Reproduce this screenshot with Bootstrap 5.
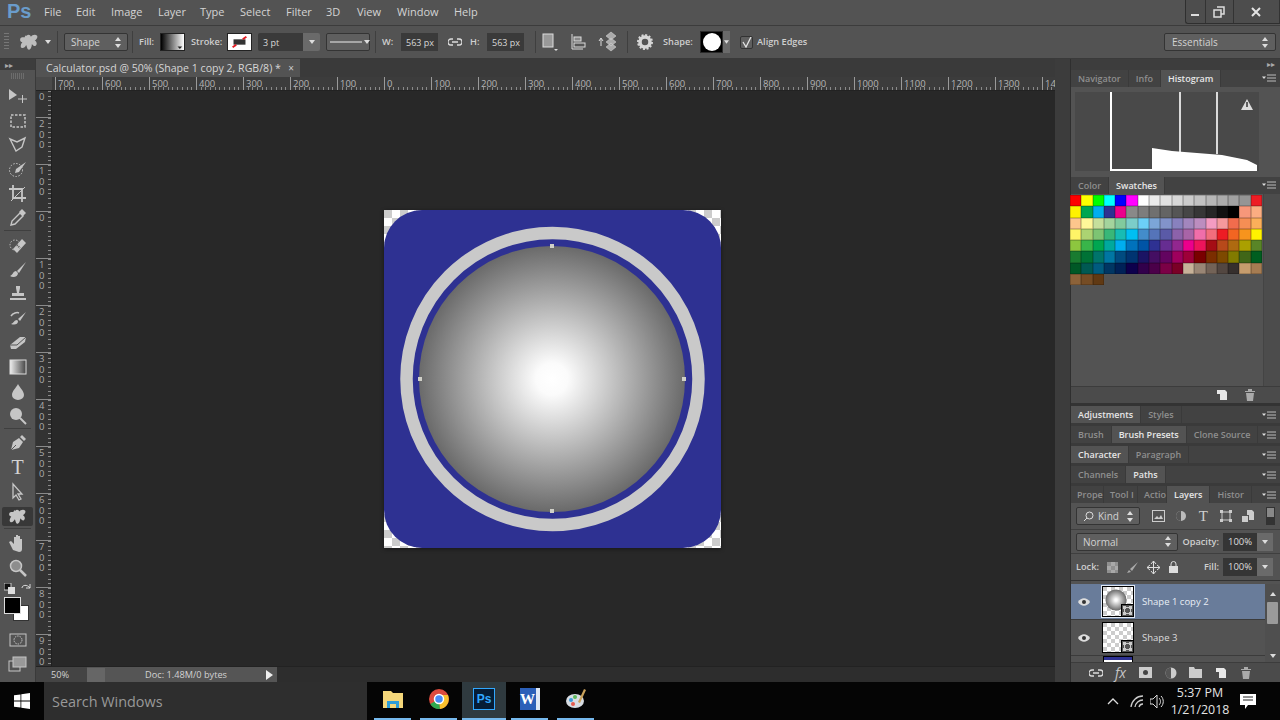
<!DOCTYPE html>
<html lang="en"><head><meta charset="utf-8"><title>Photoshop</title>
<link href="https://cdn.jsdelivr.net/npm/bootstrap@5.3.0/dist/css/bootstrap.min.css" rel="stylesheet">
<style>
html,body{margin:0;height:720px;width:1280px;overflow:hidden;background:#535353}
body{font-family:"Open Sans","Noto Sans",sans-serif;font-size:10px;color:#d0d0d0;line-height:1}
svg{display:block;flex:none}
.menubar{height:26px;background:#535353;border-bottom:1px solid #3c3c3c}
.logo{font:bold 20px "Liberation Sans",sans-serif;color:#6a9ccb;width:44px;padding-left:7px;padding-bottom:2px}
.menu{gap:0;font-size:11px;color:#d4d4d4;padding-bottom:2px}
.menu span{display:block}
.m1{width:32px}.m2{width:35px}.m3{width:47px}.m4{width:42px}.m5{width:40px}.m6{width:46px}.m7{width:40px}.m8{width:31px}.m9{width:40px}.m10{width:57px}
.winbtns{width:95px;height:24px;border:1px solid #2f2f2f;border-top:0;border-right:0;border-radius:0 0 0 3px;background:#4d4d4d}
.winbtns>div{border-right:1px solid #333}
.wb1{width:20px}.wb2{width:28px}.wb3{width:47px}
.optbar{height:33px;background:#535353;border-bottom:1px solid #3a3a3a;padding-left:4px}
.grip{width:5px;height:18px;background:repeating-linear-gradient(#777 0 1px,transparent 1px 3px)}
.sep{width:1px;height:22px;background:#3f3f3f}
.sel{height:18px;border:1px solid #343434;border-radius:2px;background:#5f5f5f;color:#d2d2d2;padding:0 6px;white-space:nowrap}
.ud{width:6px;height:11px;margin-left:auto}
.inp{height:18px;background:#3a3a3a;color:#d8d8d8;padding:0 5px;font-size:9px;white-space:nowrap}
.lab{color:#cfcfcf;font-size:9.2px;font-weight:600;white-space:nowrap}
.o-tool{margin-left:11px}.o-car{margin-left:6px}.o-s1{margin-left:6px}
.o-shape{width:64px;margin-left:6px}.o-s2{margin-left:4px}.o-fill{margin-left:6px;width:21px}
.o-fs{width:25px;height:18px;margin-left:0;border:1px solid #222}
.o-stl{margin-left:6px;width:36px}.o-pt{width:45px;margin-left:6px;border-radius:2px 0 0 2px}
.o-ptb{width:17px;height:18px;background:#6a6a6a;border-radius:0 2px 2px 0;margin-right:6px}
.o-ln{width:44px;padding:0 3px}.o-s3{margin-left:5px}.o-w{margin-left:6px;width:19px}
.o-val{width:37px}.o-link{margin:0 8px 0 10px}.o-h{width:17px}
.o-s4{margin-left:11px}.o-ic1{margin-left:4px}.o-ic2{margin-left:9px}.o-ic3{margin-left:8px}.o-s5{margin-left:8px}
.o-gear{margin-left:8px}.o-shl{margin-left:9px;width:37px}
.o-prev{width:23px;height:22px;background:#000;border:1px solid #2a2a2a}
.o-prev b{width:18px;height:18px;border-radius:50%;background:#fff;display:block}
.o-pb{width:7px;height:22px;background:#6a6a6a;margin-right:10px}
.o-chk{width:13px;height:13px;border:1px solid #333;background:#5f5f5f;margin-right:4px;border-radius:2px}
.o-ess{width:112px;height:18px;margin-left:auto;margin-right:4px;padding:0 7px}
.ws{height:623px}
.tools{width:36px;background:#535353;border-right:1px solid #3a3a3a}
.strip{height:11px;background:#3d3d3d;color:#aaa;font-size:8px;padding:0 5px}
.tgrip{height:6px;margin:3px auto 5px;width:14px;background:repeating-linear-gradient(90deg,#777 0 1px,transparent 1px 2px);opacity:.7}
.tl{height:24.4px;color:#c6c6c6}
.tl.on{background:#383838;margin:3px 2px 2.4px;border-radius:2px;height:19px}
.tsep{height:2.700px;border-top:1px solid #3f3f3f;margin:0 4px}
.ttxt{font:20px "Liberation Serif",serif;color:#d4d4d4}
.swaprow{margin-top:3px}
.chips{height:24px;width:28px;margin:3px auto 7px;position:relative}
.chips .bg{position:absolute;left:9px;top:8px;width:16px;height:16px;background:#fff;border:1px solid #333}
.chips .fg{position:absolute;left:0;top:0;width:17px;height:17px;background:#000;border:1px solid #ddd}
.docarea{width:1019px;background:#282828}
.tabstrip{height:18px;background:#3a3a3a}
.doctab{width:264px;background:#535353;color:#d6d6d6;font-size:10.6px;padding-left:10px;height:18px}
.doctab .x{margin-left:auto;margin-right:6px;color:#ccc;font-size:10px}
.corner{width:16px;background:#4a4a4a}
.hruler{height:15px;background:#3c3c3c;border-bottom:1px solid #222;overflow:hidden}
.hticks{background:repeating-linear-gradient(90deg,#8a8a8a 0 1px,transparent 1px 4.7px) 3px 100%/100% 3px no-repeat;overflow:hidden}
.hc{width:47px;flex:none;border-left:1px solid #9a9a9a;color:#b4b4b4;font-size:9.5px;padding:2px 0 0 2px;height:14px}
.hc:last-child{width:13px}
.hfirst{width:3px;flex:none}
.mid{height:575px}
.vruler{width:16px;background:#333;border-right:1px solid #1f1f1f;color:#aaa;font-size:9.5px}
.vseg{height:47px;flex:none;border-top:1px solid #8a8a8a;padding:1px 0 0 3px;background:repeating-linear-gradient(#8a8a8a 0 1px,transparent 1px 4.7px) 100% 0/3px 100% no-repeat}
.vseg span{display:block;height:10.5px;line-height:10.5px}
.vseg:last-child{height:32px}
.vfirst{height:26px;border-top:0}
.canvas{background:#282828;padding-right:2px}
.canvas svg{filter:drop-shadow(0 1px 2px rgba(0,0,0,.45))}
.status{height:17px;background:#2d2d2d;border-top:1px solid #222}
.st1{width:241px;background:#444;color:#d2d2d2;font-size:9.2px;padding-left:15px;height:100%}
.stbox{width:193px;height:100%;margin-left:18px;background:#555}
.st-ic{width:18px;height:14px;background:#666;margin-right:40px}
.gutter{width:15px;background:#3c3c3c}
.panels{width:210px;background:#535353;border-left:1px solid #2f2f2f}
.pstrip{height:11px;background:#3d3d3d;color:#aaa;font-size:8px;padding-right:5px}
.pt{height:17px;background:#424242}
.pt .nav{flex-wrap:nowrap}
.pt a.nav-link{padding:0 7px;height:17px;display:flex;align-items:center;color:#8f8f8f;font-size:9px;font-weight:600;border-right:1px solid #3a3a3a;white-space:nowrap}
.pt a.nav-link.active{background:#535353;color:#e6e6e6}
.pt a.nav-link.cut{padding:0 0 0 6px}
.w33{width:33px}.w34{width:34px}.w29{width:29px}
.pm{margin-left:auto;margin-right:4px}
.hist{height:90px;padding:5px 4px 6px}
.swbody{height:193px;background:#535353}
.swgrid{display:grid;grid-template-columns:repeat(17,11.3px);grid-auto-rows:11.3px;align-content:start;width:193px;padding-top:1px;margin-left:-1px}
.swgrid i{display:block;box-shadow:inset 0 0 0 .5px rgba(0,0,0,.35)}
.swscroll{width:17px;margin-left:auto;background:#4c4c4c;border-left:1px solid #444}
.pfoot{height:17px;background:#4b4b4b;color:#ccc;border-top:1px solid #3c3c3c}
.pgap{height:3px;background:#333}
.pgap2{height:3px;background:#3a3a3a}
.ltool{height:26px;padding:0 5px;background:#535353}
.kind{width:64px;height:18px}
.ltc{width:22.500px;height:18px}
.ltfirst{margin-left:7px}
.ltxt{font:15px "Liberation Serif",serif;color:#d0d0d0}
.ltog{width:9px;height:18px;margin-left:auto;background:linear-gradient(#888 0 9px,#333 9px);border:1px solid #333}
.lblend{height:24px;border-top:1px solid #3f3f3f;padding:0 7px 0 5px}
.normal{width:102px}
.opv{width:34px;height:18px;background:#353535;margin-left:4px;color:#ddd;font-size:9.5px;padding-left:5px}
.opb{width:16px;height:18px;background:#6a6a6a}
.llock{height:28px;border-top:1px solid #3f3f3f;border-bottom:1px solid #333;padding:0 7px 0 5px}
.list{height:81px;padding-top:3px}
.rows{width:195px}
.row-l{height:36px;color:#dcdcdc;border-bottom:1px solid #3b3b3b;font-size:9.5px}
.row-l.act{background:#697c9a;color:#e8eef5}
.eye{margin:0 12px 0 7px}
.thumb{width:32px;height:31px;margin-right:8px;border:1px solid #000;position:relative;background:#fff}
.act .thumb{outline:1px solid #dfe8f5}
.thumb svg.tb{width:100%;height:100%}
.vmask{position:absolute;right:-1px;bottom:-1px;width:13px;height:13px;background:#555;border:1px solid #000}
.row-p{height:6px;padding-left:32px;overflow:hidden}
.row-p div{width:30px;height:6px;background:linear-gradient(#2e3192 0 3px,#fff 3px);border:1px solid #000;border-bottom:0}
.lscroll{width:15px;background:#4f4f4f}
.lscroll b{display:block;width:11px;height:22px;background:#9b9b9b;margin:6px auto 0;border-radius:1px}
.lfoot{height:20px;background:#4b4b4b;border-top:1px solid #3c3c3c;color:#c6c6c6;padding-left:12px}
.lf{width:25px;height:18px}
.fxt{font-size:14px;font-style:italic}
.taskbar{height:38px;background:#050505;color:#ddd}
.start{width:44px}
.search{width:323px;height:38px;background:#2e2e2e;color:#999;font:14.4px "Open Sans",sans-serif;padding-left:8px}
.tasks{margin-left:7px}
.tk{width:37px;height:38px;margin-right:9px;border-bottom:2px solid #76b9ed;padding-bottom:2px}
.tk.on{width:44px;background:#2f3a3f;margin:0 5px 0 -4px}
.psi{width:22px;height:22px;background:#061d36;border:1.5px solid #31a8ff;color:#31a8ff;font:bold 12px "Liberation Sans",sans-serif}
.wdi{width:20px;height:22px;background:#2b5fb8;color:#fff;font:bold 15px "Liberation Serif",serif;border-right:4px solid #dfe8f5}
.tray{margin-left:auto}
.tr-w{margin-left:11px}.tr-v{margin-left:6px}
.clock{width:70px;text-align:center;font:12.4px/17px "Open Sans",sans-serif;color:#e4e4e4}
.tr-n{margin:0 24px 0 5px}
</style></head><body>
<svg width="0" height="0" class="position-absolute"><defs>
<symbol id="splat" viewBox="0 0 20 20"><path fill="currentColor" d="M7 3c1.500-2 4-1 4.500 1 1-2 5-3 6.500-1 1 2-1 4-2.500 5 2 1 3 4 1 5.500-2 1-3-1-4-2 0 2-1 6-3 6-2 0-2-3-3-5-1 2-3 4-5 3-1.500-1-.5-4 1-6-2 0-3-2-2-4 1-1.500 3-1 4.500-1 0-1 .5-1.500 1-2z"/></symbol>
<symbol id="move" viewBox="0 0 20 20"><path fill="currentColor" d="M1 3l8 6-8 5z"/><path stroke="currentColor" fill="none" d="M10 13h9M14.500 9v8"/></symbol>
<symbol id="marq" viewBox="0 0 20 20"><rect x="3" y="4" width="14" height="12" fill="none" stroke="currentColor" stroke-width="1.500" stroke-dasharray="2.500 1.500"/></symbol>
<symbol id="lasso" viewBox="0 0 20 20"><path d="M2 4l7 3 8-4-3 9-6 4-2-4z" fill="none" stroke="currentColor" stroke-width="1.400"/></symbol>
<symbol id="quick" viewBox="0 0 20 20"><circle cx="8" cy="11" r="6.500" fill="none" stroke="currentColor" stroke-dasharray="1.500 1.500"/><path d="M18 3L8 10l-1 4 4-1z" fill="currentColor"/></symbol>
<symbol id="crop" viewBox="0 0 20 20"><path d="M5 1v13h13M1 5h13v13" fill="none" stroke="currentColor" stroke-width="1.800"/><path d="M3 17L17 3" stroke="currentColor"/></symbol>
<symbol id="drop" viewBox="0 0 20 20"><path d="M3 17l1-4 8-8 3 3-8 8z" fill="none" stroke="currentColor" stroke-width="1.400"/><path d="M11 4l3-3 4 4-3 3z" fill="currentColor"/></symbol>
<symbol id="heal" viewBox="0 0 20 20"><circle cx="7" cy="10" r="5" fill="none" stroke="currentColor" stroke-dasharray="1.500 1.500"/><path d="M5 14L14 4l4 4-9 10z" fill="currentColor"/><path d="M9 10l3 3" stroke="#555" stroke-width="2" stroke-dasharray="1 1"/></symbol>
<symbol id="brush" viewBox="0 0 20 20"><path d="M18 2L9 11l2 2z" fill="currentColor"/><path d="M8 11c-3 0-3 4-6 5 3 2 8 1 8-3z" fill="currentColor"/></symbol>
<symbol id="stamp" viewBox="0 0 20 20"><path d="M8 2h4v2l-1 5h5v3H4V9h5L8 4z" fill="currentColor"/><path d="M2 14h16v2H2z" fill="currentColor"/></symbol>
<symbol id="hist" viewBox="0 0 20 20"><path d="M18 4L10 11l2 2z" fill="currentColor"/><path d="M9 12c-3 0-3 3-6 4 3 1 7 1 7-3z" fill="currentColor"/><path d="M3 8c2-3 6-4 8-3" fill="none" stroke="currentColor" stroke-width="1.500"/></symbol>
<symbol id="erase" viewBox="0 0 20 20"><path d="M2 12L12 4h6l-1 5-9 7H3z" fill="currentColor"/><path d="M2 12h7l9-8" stroke="#555" fill="none"/></symbol>
<symbol id="grad" viewBox="0 0 20 20"><defs><linearGradient id="gg"><stop offset="0" stop-color="#eee"/><stop offset="1" stop-color="#444"/></linearGradient></defs><rect x="2" y="3" width="16" height="14" fill="url(#gg)" stroke="#ddd"/></symbol>
<symbol id="blur" viewBox="0 0 20 20"><path d="M10 2c2 4 6 7 6 11a6 5 0 0 1-12 0c0-4 4-7 6-11z" fill="currentColor"/></symbol>
<symbol id="dodge" viewBox="0 0 20 20"><circle cx="8" cy="8" r="6" fill="currentColor"/><path d="M12 12l6 6" stroke="currentColor" stroke-width="2"/></symbol>
<symbol id="pen" viewBox="0 0 20 20"><path d="M3 17l2-8 6-4 4 4-4 6z" fill="currentColor"/><path d="M12 4l2-2 4 4-2 2z" fill="currentColor"/><path d="M3 17l5-5" stroke="#555"/></symbol>
<symbol id="path" viewBox="0 0 20 20"><path d="M5 2v14l3-3 3 5 2-1-3-5h4z" fill="#555" stroke="currentColor" stroke-width="1.300"/></symbol>
<symbol id="hand" viewBox="0 0 20 20"><path d="M5 17L1 9l2-1 3 3V4h2v5-7h2v7-6h2v7-4h2v10c0 2-1 3-3 3z" fill="currentColor"/></symbol>
<symbol id="zoom" viewBox="0 0 20 20"><circle cx="8" cy="8" r="5.500" fill="#8d8d8d" stroke="currentColor" stroke-width="1.500"/><path d="M12 12l6 6" stroke="currentColor" stroke-width="2.500"/></symbol>
<symbol id="qm" viewBox="0 0 20 20"><rect x="2" y="4" width="16" height="12" fill="none" stroke="currentColor"/><circle cx="10" cy="10" r="4" fill="none" stroke="currentColor" stroke-dasharray="1.500 1"/></symbol>
<symbol id="scr" viewBox="0 0 20 20"><rect x="1" y="7" width="11" height="10" fill="none" stroke="currentColor"/><rect x="5" y="3" width="13" height="10" fill="#999" stroke="currentColor"/></symbol>
<symbol id="pmenu" viewBox="0 0 14 8"><path d="M0 2.500h4L2 5z" fill="#ddd"/><path d="M5 1h9M5 4h9M5 7h9" stroke="#bbb"/></symbol>
<symbol id="ud" viewBox="0 0 6 11"><path d="M3 0l3 4H0zM3 11L0 7h6z" fill="#ddd"/></symbol>
<symbol id="dn" viewBox="0 0 6 4"><path d="M0 0h6L3 4z" fill="#ddd"/></symbol>
<symbol id="eye" viewBox="0 0 12 8"><path d="M0 4c3-5 9-5 12 0-3 5-9 5-12 0z" fill="#ddd"/><circle cx="6" cy="4" r="2" fill="#333"/></symbol>
<symbol id="newl" viewBox="0 0 12 12"><path d="M1 1h8l2 2v8H4V5H1z" fill="#e8e8e8"/></symbol>
<symbol id="trash" viewBox="0 0 12 12"><path d="M1 2h10v1H1zM4 0h4v2H4zM2 4h8l-1 8H3z" fill="#aaa"/></symbol>
<symbol id="link" viewBox="0 0 14 8"><path d="M5 1H3a3 3 0 0 0 0 6h2M9 1h2a3 3 0 0 1 0 6H9M4 4h6" fill="none" stroke="#ddd" stroke-width="1.300"/></symbol>
<symbol id="vm" viewBox="0 0 11 11"><rect x="2.500" y="2.500" width="6" height="6" fill="none" stroke="#ccc"/><path d="M1 1h3v3H1zM7 1h3v3H7zM1 7h3v3H1zM7 7h3v3H7z" fill="#ccc"/></symbol>
<pattern id="chk" width="16" height="16" patternUnits="userSpaceOnUse"><rect width="16" height="16" fill="#fff"/><rect width="8" height="8" fill="#ccc"/><rect x="8" y="8" width="8" height="8" fill="#ccc"/></pattern>
<pattern id="chk2" width="8" height="8" patternUnits="userSpaceOnUse"><rect width="8" height="8" fill="#fff"/><rect width="4" height="4" fill="#ccc"/><rect x="4" y="4" width="4" height="4" fill="#ccc"/></pattern>
<radialGradient id="ball"><stop offset="0" stop-color="#fff"/><stop offset=".12" stop-color="#fbfbfb"/><stop offset="1" stop-color="#6a6a6a"/></radialGradient>
</defs></svg>

<header class="menubar d-flex align-items-center">
 <div class="logo">Ps</div>
 <nav class="menu d-flex"><span class="m1">File</span><span class="m2">Edit</span><span class="m3">Image</span><span class="m4">Layer</span><span class="m5">Type</span><span class="m6">Select</span><span class="m7">Filter</span><span class="m8">3D</span><span class="m9">View</span><span class="m10">Window</span><span>Help</span></nav>
 <div class="winbtns d-flex ms-auto align-self-start">
  <div class="wb1 d-flex align-items-center justify-content-center"><svg width="10" height="10"><path d="M1 8h8" stroke="#ddd" stroke-width="2"/></svg></div>
  <div class="wb2 d-flex align-items-center justify-content-center"><svg width="12" height="12"><path d="M4 1h7v7H8M1 4h7v7H1z" fill="none" stroke="#ddd" stroke-width="1.500"/></svg></div>
  <div class="wb3 d-flex align-items-center justify-content-center"><svg width="12" height="12"><path d="M2 2l8 8M10 2l-8 8" stroke="#e4e4e4" stroke-width="2"/></svg></div>
 </div>
</header>

<section class="optbar d-flex align-items-center">
 <div class="grip"></div>
 <svg class="o-tool" width="19" height="19" color="#bdbdbd"><use href="#splat"/></svg>
 <svg class="o-car" width="6" height="4" ><use href="#dn"/></svg>
 <div class="sep o-s1"></div>
 <div class="sel o-shape d-flex align-items-center">Shape<svg class="ud" viewBox="0 0 6 11"><use href="#ud"/></svg></div>
 <div class="sep o-s2"></div>
 <div class="lab o-fill">Fill:</div>
 <svg class="o-fs" viewBox="0 0 25 18" preserveAspectRatio="none"><defs><linearGradient id="fg"><stop offset="0" stop-color="#000"/><stop offset="1" stop-color="#fff"/></linearGradient></defs><rect width="25" height="18" fill="url(#fg)"/><path d="M18 14h5l-2.500 3z" fill="#222"/></svg>
 <div class="lab o-stl">Stroke:</div>
 <svg class="o-fs" viewBox="0 0 25 18" preserveAspectRatio="none"><rect width="25" height="18" fill="#fff"/><rect x="6" y="6" width="13" height="6" fill="#333"/><path d="M16 6l4-3M5 15l4-3" stroke="#e31b23" stroke-width="2"/></svg>
 <div class="inp o-pt d-flex align-items-center">3 pt</div>
 <div class="o-ptb d-flex align-items-center justify-content-center"><svg width="6" height="4"><use href="#dn"/></svg></div>
 <div class="sel o-ln d-flex align-items-center"><svg width="34" height="4"><path d="M0 2h32" stroke="#eee"/></svg><svg width="6" height="4"><use href="#dn"/></svg></div>
 <div class="sep o-s3"></div>
 <div class="lab o-w">W:</div>
 <div class="inp o-val d-flex align-items-center">563 px</div>
 <svg class="o-link" width="14" height="8"><use href="#link"/></svg>
 <div class="lab o-h">H:</div>
 <div class="inp o-val d-flex align-items-center">563 px</div>
 <div class="sep o-s4"></div>
 <svg class="o-ic1" width="20" height="20"><rect x="3" y="2" width="10" height="13" fill="#999" stroke="#ddd"/><path d="M14 17h4l-2 2z" fill="#ddd"/></svg>
 <svg class="o-ic2" width="20" height="20"><path d="M3 2v15h11" fill="none" stroke="#ddd"/><rect x="5" y="5" width="7" height="4" fill="#888" stroke="#ddd"/><rect x="5" y="11" width="11" height="4" fill="#555" stroke="#ddd"/></svg>
 <svg class="o-ic3" width="22" height="22"><path d="M14 1l5 4-5 4-5-4zM14 7l5 4-5 4-5-4zM14 12l5 4-5 4-5-4z" fill="#aaa" stroke="#ddd" stroke-width=".5"/><path d="M4 8v7M2 10l2-3 2 3" fill="none" stroke="#ddd"/></svg>
 <div class="sep o-s5"></div>
 <svg class="o-gear" width="18" height="18"><circle cx="9" cy="9" r="5" fill="none" stroke="#d6d6d6" stroke-width="3.500"/><circle cx="9" cy="9" r="7" fill="none" stroke="#d6d6d6" stroke-width="2" stroke-dasharray="2 1.660"/></svg>
 <div class="lab o-shl">Shape:</div>
 <div class="o-prev d-flex align-items-center justify-content-center"><b></b></div>
 <div class="o-pb d-flex align-items-center justify-content-center"><svg width="5" height="4"><use href="#dn"/></svg></div>
 <div class="o-chk d-flex align-items-center justify-content-center"><svg width="11" height="11"><path d="M2 5l3 5 5-10" fill="none" stroke="#e4e4e4" stroke-width="1.300"/></svg></div>
 <div class="lab">Align Edges</div>
 <div class="sel o-ess d-flex align-items-center">Essentials<svg class="ud" viewBox="0 0 6 11"><use href="#ud"/></svg></div>
</section>

<main class="ws d-flex">
 <aside class="tools d-flex flex-column">
  <div class="strip d-flex align-items-center">▸▸</div>
  <div class="tgrip"></div>
  <div class="tl d-flex align-items-center justify-content-center"><svg width="20" height="20"><use href="#move"/></svg></div>
  <div class="tl d-flex align-items-center justify-content-center"><svg width="20" height="20"><use href="#marq"/></svg></div>
  <div class="tl d-flex align-items-center justify-content-center"><svg width="20" height="20"><use href="#lasso"/></svg></div>
  <div class="tl d-flex align-items-center justify-content-center"><svg width="20" height="20"><use href="#quick"/></svg></div>
  <div class="tl d-flex align-items-center justify-content-center"><svg width="20" height="20"><use href="#crop"/></svg></div>
  <div class="tl d-flex align-items-center justify-content-center"><svg width="20" height="20"><use href="#drop"/></svg></div>
  <div class="tsep"></div>
  <div class="tl d-flex align-items-center justify-content-center"><svg width="20" height="20"><use href="#heal"/></svg></div>
  <div class="tl d-flex align-items-center justify-content-center"><svg width="20" height="20"><use href="#brush"/></svg></div>
  <div class="tl d-flex align-items-center justify-content-center"><svg width="20" height="20"><use href="#stamp"/></svg></div>
  <div class="tl d-flex align-items-center justify-content-center"><svg width="20" height="20"><use href="#hist"/></svg></div>
  <div class="tl d-flex align-items-center justify-content-center"><svg width="20" height="20"><use href="#erase"/></svg></div>
  <div class="tl d-flex align-items-center justify-content-center"><svg width="20" height="20"><use href="#grad"/></svg></div>
  <div class="tl d-flex align-items-center justify-content-center"><svg width="20" height="20"><use href="#blur"/></svg></div>
  <div class="tl d-flex align-items-center justify-content-center"><svg width="20" height="20"><use href="#dodge"/></svg></div>
  <div class="tsep"></div>
  <div class="tl d-flex align-items-center justify-content-center"><svg width="20" height="20"><use href="#pen"/></svg></div>
  <div class="tl ttxt d-flex align-items-center justify-content-center">T</div>
  <div class="tl d-flex align-items-center justify-content-center"><svg width="20" height="20"><use href="#path"/></svg></div>
  <div class="tl on d-flex align-items-center justify-content-center"><svg width="18" height="18"><use href="#splat"/></svg></div>
  <div class="tsep"></div>
  <div class="tl d-flex align-items-center justify-content-center"><svg width="20" height="20"><use href="#hand"/></svg></div>
  <div class="tl d-flex align-items-center justify-content-center"><svg width="20" height="20"><use href="#zoom"/></svg></div>
  <div class="swaprow d-flex justify-content-between px-1"><svg width="11" height="11"><rect x="0" y="0" width="7" height="7" fill="#111" stroke="#ccc"/><rect x="4" y="4" width="7" height="7" fill="#ddd"/></svg><svg width="11" height="11"><path d="M2 5c0-3 5-4 8 0M10 1v4H6" fill="none" stroke="#ddd"/></svg></div>
  <div class="chips"><div class="bg"></div><div class="fg"></div></div>
  <div class="tl d-flex align-items-center justify-content-center"><svg width="20" height="20"><use href="#qm"/></svg></div>
  <div class="tl d-flex align-items-center justify-content-center"><svg width="20" height="20"><use href="#scr"/></svg></div>
 </aside>

 <div class="docarea d-flex flex-column">
  <div class="tabstrip d-flex"><div class="doctab d-flex align-items-center">Calculator.psd @ 50% (Shape 1 copy 2, RGB/8) *<span class="x">×</span></div></div>
  <div class="hruler d-flex">
   <div class="corner"></div>
   <div class="hticks d-flex flex-grow-1"><div class="hfirst"></div><div class="hc">700</div><div class="hc">600</div><div class="hc">500</div><div class="hc">400</div><div class="hc">300</div><div class="hc">200</div><div class="hc">100</div><div class="hc">0</div><div class="hc">100</div><div class="hc">200</div><div class="hc">300</div><div class="hc">400</div><div class="hc">500</div><div class="hc">600</div><div class="hc">700</div><div class="hc">800</div><div class="hc">900</div><div class="hc">1000</div><div class="hc">1100</div><div class="hc">1200</div><div class="hc">1300</div><div class="hc">14</div></div>
  </div>
  <div class="mid d-flex">
   <div class="vruler d-flex flex-column">
    <div class="vseg vfirst"><span>0</span></div>
    <div class="vseg"><span>2</span><span>0</span><span>0</span></div>
    <div class="vseg"><span>1</span><span>0</span><span>0</span></div>
    <div class="vseg"><span>0</span></div>
    <div class="vseg"><span>1</span><span>0</span><span>0</span></div>
    <div class="vseg"><span>2</span><span>0</span><span>0</span></div>
    <div class="vseg"><span>3</span><span>0</span><span>0</span></div>
    <div class="vseg"><span>4</span><span>0</span><span>0</span></div>
    <div class="vseg"><span>5</span><span>0</span><span>0</span></div>
    <div class="vseg"><span>6</span><span>0</span><span>0</span></div>
    <div class="vseg"><span>7</span><span>0</span><span>0</span></div>
    <div class="vseg"><span>8</span><span>0</span><span>0</span></div>
    <div class="vseg"><span>9</span><span>0</span><span>0</span></div>
   </div>
   <div class="canvas flex-grow-1 d-flex align-items-center justify-content-center">
    <svg width="337" height="338" viewBox="0 0 337 338">
     <rect width="337" height="338" fill="url(#chk)"/>
     <rect width="337" height="338" rx="38" fill="#2e3192"/>
     <circle cx="168.500" cy="169" r="146" fill="none" stroke="#c9c9c9" stroke-width="12.500"/>
     <circle cx="168" cy="169" r="133" fill="url(#ball)"/>
     <g fill="#d0d0c8"><rect x="166" y="34" width="4" height="4"/><rect x="166" y="299" width="4" height="4"/><rect x="34" y="167" width="4" height="4"/><rect x="298" y="167" width="4" height="4"/></g>
    </svg>
   </div>
  </div>
  <div class="status d-flex align-items-center">
   <div class="st1 d-flex align-items-center"><span>50%</span><div class="stbox d-flex align-items-center"><div class="st-ic"></div><span>Doc: 1.48M/0 bytes</span><svg class="ms-auto me-1" width="7" height="10"><path d="M0 0l7 5-7 5z" fill="#eee"/></svg></div></div>
  </div>
 </div>

 <div class="gutter"></div>

 <aside class="panels d-flex flex-column">
  <div class="pstrip d-flex align-items-center justify-content-end">▸▸</div>
  <div class="pt d-flex align-items-center"><div class="nav"><a class="nav-link">Navigator</a><a class="nav-link">Info</a><a class="nav-link active">Histogram</a></div><svg class="pm" width="14" height="8"><use href="#pmenu"/></svg></div>
  <div class="hist">
   <svg width="184" height="79" viewBox="0 0 184 79"><rect width="184" height="79" fill="#494949"/><path d="M35 0h2v77h40V56l20 3 50 4 25 5 10 5v6H35z" fill="#fff"/><path d="M105 0v60M142 0v62" stroke="#fff" stroke-width="1.600"/><path d="M172 7l6 11h-12z" fill="#ddd"/><path d="M172 10v5" stroke="#333" stroke-width="1.500"/></svg>
  </div>
  <div class="pt d-flex align-items-center"><div class="nav"><a class="nav-link">Color</a><a class="nav-link active">Swatches</a></div><svg class="pm" width="14" height="8"><use href="#pmenu"/></svg></div>
  <div class="swbody d-flex">
   <div class="swgrid">
<i style="background:#f00"></i><i style="background:#ff0"></i><i style="background:#0f0"></i><i style="background:#0ff"></i><i style="background:#00f"></i><i style="background:#f0f"></i><i style="background:#fff"></i><i style="background:#ebebeb"></i><i style="background:#e1e1e1"></i><i style="background:#d7d7d7"></i><i style="background:#ccc"></i><i style="background:#c2c2c2"></i><i style="background:#b7b7b7"></i><i style="background:#acacac"></i><i style="background:#a1a1a1"></i><i style="background:#959595"></i><i style="background:#ed1c24"></i>
<i style="background:#fff200"></i><i style="background:#00a651"></i><i style="background:#00aeef"></i><i style="background:#2e3192"></i><i style="background:#ec008c"></i><i style="background:#898989"></i><i style="background:#7d7d7d"></i><i style="background:#707070"></i><i style="background:#646464"></i><i style="background:#555"></i><i style="background:#464646"></i><i style="background:#363636"></i><i style="background:#262626"></i><i style="background:#111"></i><i style="background:#000"></i><i style="background:#f7977a"></i><i style="background:#fbad82"></i>
<i style="background:#fdc68c"></i><i style="background:#fff799"></i><i style="background:#c6df9c"></i><i style="background:#a4d49d"></i><i style="background:#81ca9d"></i><i style="background:#7bcdc9"></i><i style="background:#6ccff7"></i><i style="background:#7ca6d8"></i><i style="background:#8293ca"></i><i style="background:#8881be"></i><i style="background:#a286bd"></i><i style="background:#bc8dbf"></i><i style="background:#f49bc1"></i><i style="background:#f5999d"></i><i style="background:#f16c4d"></i><i style="background:#f68e54"></i><i style="background:#fbaf5a"></i>
<i style="background:#fff467"></i><i style="background:#acd372"></i><i style="background:#7dc473"></i><i style="background:#39b778"></i><i style="background:#17bcb4"></i><i style="background:#00bff3"></i><i style="background:#438cca"></i><i style="background:#5574b9"></i><i style="background:#5a5aa7"></i><i style="background:#8c62aa"></i><i style="background:#a864a7"></i><i style="background:#f06eaa"></i><i style="background:#f26d7d"></i><i style="background:#ed1c24"></i><i style="background:#f26522"></i><i style="background:#f7941d"></i><i style="background:#fff200"></i>
<i style="background:#8dc63f"></i><i style="background:#39b54a"></i><i style="background:#00a651"></i><i style="background:#00a99d"></i><i style="background:#00aeef"></i><i style="background:#0072bc"></i><i style="background:#0054a6"></i><i style="background:#2e3192"></i><i style="background:#662d91"></i><i style="background:#92278f"></i><i style="background:#ec008c"></i><i style="background:#ed145b"></i><i style="background:#a50d15"></i><i style="background:#b7491a"></i><i style="background:#ae6a10"></i><i style="background:#aba000"></i><i style="background:#598527"></i>
<i style="background:#197b30"></i><i style="background:#007236"></i><i style="background:#00746b"></i><i style="background:#0076a3"></i><i style="background:#004b80"></i><i style="background:#003471"></i><i style="background:#1b1464"></i><i style="background:#440e62"></i><i style="background:#630460"></i><i style="background:#9e005d"></i><i style="background:#9e0039"></i><i style="background:#790000"></i><i style="background:#7b2e00"></i><i style="background:#7d4900"></i><i style="background:#827b00"></i><i style="background:#406618"></i><i style="background:#005e20"></i>
<i style="background:#005826"></i><i style="background:#005952"></i><i style="background:#005b7f"></i><i style="background:#003663"></i><i style="background:#002157"></i><i style="background:#0d004c"></i><i style="background:#32004b"></i><i style="background:#4b0049"></i><i style="background:#7b0046"></i><i style="background:#7a0026"></i><i style="background:#c7b299"></i><i style="background:#998675"></i><i style="background:#736357"></i><i style="background:#534741"></i><i style="background:#362f2d"></i><i style="background:#c69c6d"></i><i style="background:#a67c52"></i>
<i style="background:#8c6239"></i><i style="background:#754c24"></i><i style="background:#603913"></i>
   </div>
   <div class="swscroll"></div>
  </div>
  <div class="pfoot d-flex align-items-center"><svg class="ms-auto" width="12" height="12"><use href="#newl"/></svg><svg class="ms-3 me-4" width="12" height="12"><use href="#trash"/></svg></div>
  <div class="pgap"></div>
  <div class="pt d-flex align-items-center"><div class="nav"><a class="nav-link active">Adjustments</a><a class="nav-link">Styles</a></div><svg class="pm" width="14" height="8"><use href="#pmenu"/></svg></div>
  <div class="pgap2"></div>
  <div class="pt d-flex align-items-center"><div class="nav"><a class="nav-link">Brush</a><a class="nav-link active">Brush Presets</a><a class="nav-link">Clone Source</a></div><svg class="pm" width="14" height="8"><use href="#pmenu"/></svg></div>
  <div class="pgap2"></div>
  <div class="pt d-flex align-items-center"><div class="nav"><a class="nav-link active">Character</a><a class="nav-link">Paragraph</a></div><svg class="pm" width="14" height="8"><use href="#pmenu"/></svg></div>
  <div class="pgap2"></div>
  <div class="pt d-flex align-items-center"><div class="nav"><a class="nav-link">Channels</a><a class="nav-link active">Paths</a></div><svg class="pm" width="14" height="8"><use href="#pmenu"/></svg></div>
  <div class="pgap2"></div>
  <div class="pt d-flex align-items-center"><div class="nav"><a class="nav-link cut w33">Prope</a><a class="nav-link cut w34">Tool I</a><a class="nav-link cut w29">Actio</a><a class="nav-link active">Layers</a><a class="nav-link">Histor</a></div><svg class="pm" width="14" height="8"><use href="#pmenu"/></svg></div>
  <div class="ltool d-flex align-items-center">
   <div class="sel kind d-flex align-items-center"><svg width="11" height="11" class="me-1"><circle cx="6.500" cy="4.500" r="3.500" fill="none" stroke="#ddd"/><path d="M4 7l-3 3" stroke="#ddd"/></svg>Kind<svg class="ud" viewBox="0 0 6 11"><use href="#ud"/></svg></div>
   <div class="ltc ltfirst d-flex align-items-center justify-content-center"><svg width="13" height="12"><rect x=".5" y=".5" width="12" height="11" fill="none" stroke="#ccc"/><path d="M2 9l3-3 2 2 2-3 2 4z" fill="#ccc"/></svg></div>
   <div class="ltc d-flex align-items-center justify-content-center"><svg width="12" height="12"><circle cx="6" cy="6" r="5" fill="#bbb"/><path d="M6 1a5 5 0 0 0 0 10z" fill="#555"/></svg></div>
   <div class="ltc ltxt d-flex align-items-center justify-content-center">T</div>
   <div class="ltc d-flex align-items-center justify-content-center"><svg width="12" height="12"><rect x="2" y="2" width="8" height="8" fill="none" stroke="#ccc"/><path d="M0 0h3v3H0zM9 0h3v3H9zM0 9h3v3H0zM9 9h3v3H9z" fill="#ccc"/></svg></div>
   <div class="ltc d-flex align-items-center justify-content-center"><svg width="12" height="12"><path d="M5 0h5l2 2v8H7V5H5zM0 6h6v6H0z" fill="#ccc"/></svg></div>
   <div class="ltog"></div>
  </div>
  <div class="lblend d-flex align-items-center">
   <div class="sel normal d-flex align-items-center">Normal<svg class="ud" viewBox="0 0 6 11"><use href="#ud"/></svg></div>
   <div class="lab ms-auto">Opacity:</div><div class="opv d-flex align-items-center">100%</div><div class="opb d-flex align-items-center justify-content-center"><svg width="6" height="4"><use href="#dn"/></svg></div>
  </div>
  <div class="llock d-flex align-items-center">
   <div class="lab me-2">Lock:</div>
   <svg class="me-2" width="11" height="11"><rect width="11" height="11" fill="url(#chk2)" opacity=".5"/></svg>
   <svg class="me-2" width="13" height="13"><path d="M12 1L4 8l2 2zM3 9l-2 3 4-1z" fill="#aaa"/></svg>
   <svg class="me-2" width="13" height="13"><path d="M6.500 0v13M0 6.500h13M4 3l2.500-3L9 3M4 10l2.500 3L9 10M3 4L0 6.500 3 9M10 4l3 2.500L10 9" fill="none" stroke="#ddd"/></svg>
   <svg width="11" height="12"><path d="M3 5V3a2.500 2.500 0 0 1 5 0v2" fill="none" stroke="#ddd"/><rect x="1" y="5" width="9" height="7" fill="#ddd"/></svg>
   <div class="lab ms-auto">Fill:</div><div class="opv d-flex align-items-center">100%</div><div class="opb d-flex align-items-center justify-content-center"><svg width="6" height="4"><use href="#dn"/></svg></div>
  </div>
  <div class="list d-flex">
   <div class="rows">
    <div class="row-l act d-flex align-items-center"><svg class="eye" width="12" height="8"><use href="#eye"/></svg><div class="thumb"><svg class="tb" viewBox="0 0 30 29"><rect width="30" height="29" fill="url(#chk2)"/><circle cx="13" cy="13" r="10.500" fill="url(#ball)"/></svg><div class="vmask"><svg width="11" height="11"><use href="#vm"/></svg></div></div>Shape 1 copy 2</div>
    <div class="row-l d-flex align-items-center"><svg class="eye" width="12" height="8"><use href="#eye"/></svg><div class="thumb"><svg class="tb" viewBox="0 0 30 29"><rect width="30" height="29" fill="url(#chk2)"/></svg><div class="vmask"><svg width="11" height="11"><use href="#vm"/></svg></div></div>Shape 3</div>
    <div class="row-p"><div></div></div>
   </div>
   <div class="lscroll d-flex flex-column"><svg class="mx-auto mt-2" width="6" height="4"><path d="M3 0l3 4H0z" fill="#ddd"/></svg><b></b><svg class="mx-auto mt-auto mb-1" width="6" height="4"><use href="#dn"/></svg></div>
  </div>
  <div class="lfoot d-flex align-items-center">
   <div class="lf d-flex align-items-center justify-content-center"><svg width="14" height="8"><use href="#link"/></svg></div>
   <div class="lf fxt d-flex align-items-center justify-content-center">fx</div>
   <div class="lf d-flex align-items-center justify-content-center"><svg width="13" height="11"><rect width="13" height="11" fill="#ccc"/><circle cx="6.500" cy="5.500" r="2.500" fill="#444"/></svg></div>
   <div class="lf d-flex align-items-center justify-content-center"><svg width="12" height="12"><circle cx="6" cy="6" r="5.500" fill="#ccc"/><path d="M6 .5a5.500 5.500 0 0 0 0 11z" fill="#555"/></svg></div>
   <div class="lf d-flex align-items-center justify-content-center"><svg width="13" height="11"><path d="M0 0h5l1 2h7v9H0z" fill="#ccc"/></svg></div>
   <div class="lf d-flex align-items-center justify-content-center"><svg width="12" height="12"><use href="#newl"/></svg></div>
   <div class="lf d-flex align-items-center justify-content-center"><svg width="12" height="12"><use href="#trash"/></svg></div>
  </div>
 </aside>
</main>

<footer class="taskbar d-flex align-items-center">
 <div class="start d-flex align-items-center justify-content-center"><svg width="16" height="16"><path d="M0 2.300l6.500-.9v6.200H0zM7.300 1.300L16 0v7.600H7.300zM0 8.400h6.500v6.200L0 13.700zM7.300 8.400H16V16l-8.700-1.300z" fill="#fff"/></svg></div>
 <div class="search d-flex align-items-center">Search Windows</div>
 <div class="tasks d-flex">
  <div class="tk d-flex align-items-center justify-content-center"><svg width="20" height="20"><path d="M0 2h8l2 2h10v15H0z" fill="#f5d77a"/><path d="M4 12h12v7h-3v-4H7v4H4z" fill="#2f9ed8"/></svg></div>
  <div class="tk d-flex align-items-center justify-content-center"><svg width="20" height="20"><circle cx="10" cy="10" r="10" fill="#dd4b3e"/><path d="M10 10L1.300 15a10 10 0 0 0 8.700 5h1z" fill="#2fa84f"/><path d="M10 6h8.900A10 10 0 0 1 11 20z" fill="#fbc02d"/><circle cx="10" cy="10" r="4.500" fill="#4a8bf5" stroke="#fff" stroke-width="1.500"/></svg></div>
  <div class="tk on d-flex align-items-center justify-content-center"><div class="psi d-flex align-items-center justify-content-center">Ps</div></div>
  <div class="tk d-flex align-items-center justify-content-center"><div class="wdi d-flex align-items-center justify-content-center">W</div></div>
  <div class="tk d-flex align-items-center justify-content-center"><svg width="22" height="22"><ellipse cx="10" cy="13" rx="9" ry="7" fill="#d8dde3"/><circle cx="6" cy="12" r="2" fill="#3a9ad9"/><circle cx="10" cy="9" r="2" fill="#5cb85c"/><circle cx="8" cy="16" r="2" fill="#e45b4f"/><path d="M19 1l-6 13 2 1 6-13z" fill="#c9a15a"/></svg></div>
 </div>
 <div class="tray d-flex align-items-center">
  <svg width="12" height="7"><path d="M1 6l5-5 5 5" fill="none" stroke="#ddd" stroke-width="1.300"/></svg>
  <svg class="tr-w" width="14" height="13"><path d="M1 12a12 12 0 0 1 12-11M5 12a8 8 0 0 1 8-7M9 12a4 4 0 0 1 4-3" fill="none" stroke="#ccc" stroke-width="1.300"/></svg>
  <svg class="tr-v" width="15" height="13"><path d="M0 4h3l4-4v13L3 9H0zM9 3c2 2 2 5 0 7M11 1c3 3 3 8 0 11" fill="none" stroke="#ddd"/></svg>
  <div class="clock">5:37 PM<br>1/21/2018</div>
  <svg class="tr-n" width="16" height="15"><path d="M0 0h16v11H8l-3 4v-4H0z" fill="#fff"/><path d="M3 3h10M3 6h10" stroke="#222"/></svg>
 </div>
</footer>
</body></html>
